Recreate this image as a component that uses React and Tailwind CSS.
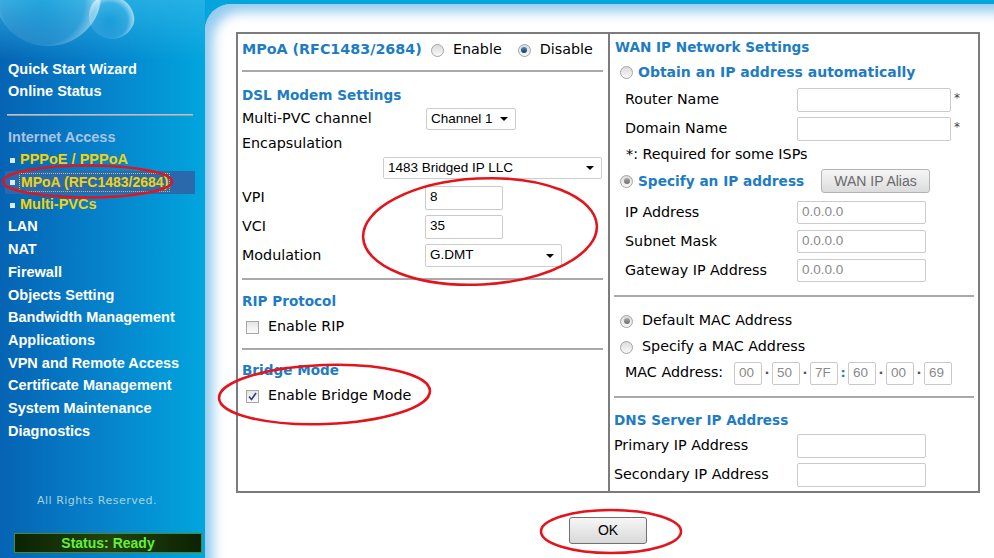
import React from 'react';

const sideFont = "font-['Liberation_Sans',Arial,sans-serif]";
const formFont = "font-['DejaVu_Sans',Verdana,sans-serif]";
const ctrlFont = "font-['Liberation_Sans',Arial,sans-serif]";

const navItems = [
  'LAN',
  'NAT',
  'Firewall',
  'Objects Setting',
  'Bandwidth Management',
  'Applications',
  'VPN and Remote Access',
  'Certificate Management',
  'System Maintenance',
  'Diagnostics',
];

const Radio = ({ checked, tone = 'blue' }) => (
  <span className="flex h-[13px] w-[13px] shrink-0 items-center justify-center rounded-full border border-[#a4a4a4] bg-gradient-to-b from-[#dcdcdc] to-[#f8f8f8]">
    {checked && (
      <span
        className={
          tone === 'blue'
            ? 'h-[6px] w-[6px] rounded-full bg-gradient-to-b from-[#4b8fc4] to-[#0f3c66]'
            : 'h-[6px] w-[6px] rounded-full bg-gradient-to-b from-[#a8a8a8] to-[#6e6e6e]'
        }
      />
    )}
  </span>
);

const Checkbox = ({ checked }) => (
  <span className="flex h-[13px] w-[13px] shrink-0 items-center justify-center border border-[#a6a6a6] bg-gradient-to-b from-[#e6e6e6] to-[#fbfbfb]">
    {checked && (
      <svg width="9" height="9" viewBox="0 0 9 9">
        <path d="M1 4.5 L3.5 7.5 L8 1" fill="none" stroke="#2c3d85" strokeWidth="1.6" />
      </svg>
    )}
  </span>
);

const Select = ({ value, className }) => (
  <div
    className={`flex items-center justify-between rounded-[2px] border border-[#cdcdcd] bg-white pl-[4px] pr-[7px] text-[13.5px] text-black ${ctrlFont} ${className}`}
  >
    <span>{value}</span>
    <span className="h-0 w-0 border-x-[4px] border-t-[4px] border-x-transparent border-t-black" />
  </div>
);

const Field = ({ value = '', className, gray }) => (
  <div
    className={`flex items-center rounded-[2px] border border-[#cbcbcb] bg-white pl-[4px] text-[13.5px] ${ctrlFont} ${
      gray ? 'text-[#8a8a8a]' : 'text-black'
    } ${className}`}
  >
    {value}
  </div>
);

const Heading = ({ children, className = '' }) => (
  <div className={`flex items-center text-[13.6px] font-bold text-[#1e7cc3] ${formFont} ${className}`}>{children}</div>
);

const Rule = ({ className = '' }) => <div className={`h-[2px] bg-[#a9a9a9] ${className}`} />;

const Sidebar = () => (
  <aside className={`relative flex h-[558px] w-[205px] shrink-0 flex-col bg-gradient-to-r from-[#0663b3] via-[#0682cb] to-[#02a6de] ${sideFont}`}>
    <svg className="absolute left-0 top-0" width="205" height="60" viewBox="0 0 205 60">
      <defs>
        <linearGradient id="topfade" x1="0" y1="0" x2="0" y2="1">
          <stop offset="0" stopColor="#2cb4e6" stopOpacity="0.8" />
          <stop offset="1" stopColor="#2cb4e6" stopOpacity="0" />
        </linearGradient>
        <radialGradient id="bub" cx="0.45" cy="0.6" r="0.55">
          <stop offset="0" stopColor="#ffffff" stopOpacity="0" />
          <stop offset="0.7" stopColor="#ffffff" stopOpacity="0.1" />
          <stop offset="0.95" stopColor="#ffffff" stopOpacity="0.55" />
          <stop offset="1" stopColor="#ffffff" stopOpacity="0" />
        </radialGradient>
      </defs>
      <rect x="0" y="0" width="205" height="60" fill="url(#topfade)" />
      <circle cx="48" cy="-8" r="54" fill="url(#bub)" />
      <circle cx="112" cy="16" r="23" fill="url(#bub)" />
    </svg>

    <div className="relative flex flex-col whitespace-nowrap pt-[59px] text-[14.5px] font-bold">
      <div className="flex h-[22px] items-center pl-[8px] text-white">Quick Start Wizard</div>
      <div className="flex h-[22px] items-center pl-[8px] text-white">Online Status</div>
      <div className="ml-[7px] mt-[11px] h-[2px] w-[186px] bg-gradient-to-b from-[#c8d2dc] to-[#7f8fa2]" />
      <div className="mt-[11px] flex h-[22px] items-center pl-[8px] text-[#a9c4e2]">Internet Access</div>
      <div className="flex h-[22px] items-center pl-[10px] text-[#f2d20c]">
        <span className="mr-[5px] h-[5px] w-[5px] bg-[#d7ecf6]" />
        PPPoE / PPPoA
      </div>
      <div className="ml-[5px] flex h-[23px] w-[190px] items-center bg-[#2a6aac] pl-[5px] text-[14px] text-[#f2d20c]">
        <span className="mr-[4px] h-[5px] w-[5px] shrink-0 bg-[#d7ecf6]" />
        <span className="border border-dotted border-[#c9c06a] px-[1px] leading-[17px]">MPoA (RFC1483/2684)</span>
      </div>
      <div className="flex h-[22px] items-center pl-[10px] text-[#f2d20c]">
        <span className="mr-[5px] h-[5px] w-[5px] bg-[#d7ecf6]" />
        Multi-PVCs
      </div>
      {navItems.map((item) => (
        <div key={item} className="flex h-[22.7px] items-center pl-[8px] text-white">
          {item}
        </div>
      ))}
    </div>

    <div className="flex-1" />
    <div className="flex h-[14px] items-center pl-[37px] font-['DejaVu_Sans',Verdana,sans-serif] text-[11px] tracking-[0.5px] text-[#a6d3dd]">
      All Rights Reserved.
    </div>
    <div className="mb-[5px] ml-[14px] mt-[25px] flex h-[20px] w-[188px] items-center justify-center border border-[#4f8a22] bg-gradient-to-r from-[#0c2204] via-[#23430c] to-[#0c2204] text-[14px] font-bold text-[#62f03a]">
      Status: Ready
    </div>
  </aside>
);

const LeftColumn = () => (
  <div className={`flex flex-col border-r-2 border-[#7c7c7c] px-[4px] text-[14.3px] text-black ${formFont}`}>
    <div className="flex h-[32px] items-center">
      <span className="w-[189px] text-[14.3px] font-bold text-[#1e7cc3]">MPoA (RFC1483/2684)</span>
      <span className="flex items-center gap-[9px]">
        <Radio />
        Enable
      </span>
      <span className="ml-[16px] flex items-center gap-[9px]">
        <Radio checked />
        Disable
      </span>
    </div>
    <Rule className="mr-[1px] mt-[4px]" />
    <Heading className="mt-[11px] h-[24px]">DSL Modem Settings</Heading>
    <div className="flex h-[24px] items-center">
      <span className="w-[184px]">Multi-PVC channel</span>
      <Select value="Channel 1" className="h-[22px] w-[90px]" />
    </div>
    <div className="flex h-[25px] items-center">Encapsulation</div>
    <div className="flex h-[24px] items-center">
      <Select value="1483 Bridged IP LLC" className="ml-[141px] h-[22px] w-[219px]" />
    </div>
    <div className="mt-[3px] flex h-[29px] items-center">
      <span className="w-[183px]">VPI</span>
      <Field value="8" className="h-[24px] w-[78px]" />
    </div>
    <div className="flex h-[29px] items-center">
      <span className="w-[183px]">VCI</span>
      <Field value="35" className="h-[24px] w-[78px]" />
    </div>
    <div className="flex h-[29px] items-center">
      <span className="w-[183px]">Modulation</span>
      <Select value="G.DMT" className="h-[23px] w-[137px]" />
    </div>
    <Rule className="mr-[1px] mt-[8px]" />
    <Heading className="mt-[9px] h-[24px]">RIP Protocol</Heading>
    <div className="flex h-[28px] items-center gap-[9px] pl-[4px]">
      <Checkbox />
      Enable RIP
    </div>
    <Rule className="mr-[1px] mt-[7px]" />
    <Heading className="mt-[8px] h-[24px]">Bridge Mode</Heading>
    <div className="flex h-[28px] items-center gap-[9px] pl-[4px]">
      <Checkbox checked />
      Enable Bridge Mode
    </div>
  </div>
);

const MacBox = ({ value }) => (
  <div className={`flex h-[23px] w-[28px] items-center rounded-[2px] border border-[#c9c9c9] pl-[4px] text-[13.5px] text-[#8a8a8a] ${ctrlFont}`}>
    {value}
  </div>
);

const Sep = ({ ch = '·', blue }) => (
  <span className={`flex w-[10px] items-center justify-center text-[13px] font-bold ${blue ? 'text-[#1e7cc3]' : 'text-[#555]'}`}>{ch}</span>
);

const RightColumn = () => (
  <div className={`flex flex-col text-[14.3px] text-black ${formFont}`}>
    <Heading className="h-[26px] pl-[5px]">WAN IP Network Settings</Heading>
    <div className="flex h-[24px] items-center gap-[5px] pl-[10px]">
      <Radio />
      <span className="text-[14px] font-bold text-[#1e7cc3]">Obtain an IP address automatically</span>
    </div>
    <div className="mt-[1px] flex h-[29px] items-center pl-[15px]">
      <span className="w-[172px]">Router Name</span>
      <Field className="h-[24px] w-[154px]" />
      <span className="ml-[3px] self-start pt-[4px] text-[12px] text-[#444]">*</span>
    </div>
    <div className="flex h-[29px] items-center pl-[15px]">
      <span className="w-[172px]">Domain Name</span>
      <Field className="h-[24px] w-[154px]" />
      <span className="ml-[3px] self-start pt-[4px] text-[12px] text-[#444]">*</span>
    </div>
    <div className="flex h-[24px] items-center pl-[16px]">*: Required for some ISPs</div>
    <div className="flex h-[28px] items-center pl-[10px]">
      <Radio checked tone="gray" />
      <span className="ml-[5px] w-[183px] text-[13.7px] font-bold text-[#1e7cc3]">Specify an IP address</span>
      <button className={`flex h-[24px] w-[109px] items-center justify-center rounded-[3px] border border-[#b4b4b4] bg-gradient-to-b from-[#f6f6f6] to-[#dcdcdc] text-[14px] text-[#6a6a6a] ${ctrlFont}`}>
        WAN IP Alias
      </button>
    </div>
    <div className="mt-[3px] flex h-[29px] items-center pl-[15px]">
      <span className="w-[172px]">IP Address</span>
      <Field value="0.0.0.0" gray className="h-[23px] w-[129px]" />
    </div>
    <div className="flex h-[29px] items-center pl-[15px]">
      <span className="w-[172px]">Subnet Mask</span>
      <Field value="0.0.0.0" gray className="h-[23px] w-[129px]" />
    </div>
    <div className="flex h-[29px] items-center pl-[15px]">
      <span className="w-[172px]">Gateway IP Address</span>
      <Field value="0.0.0.0" gray className="h-[23px] w-[129px]" />
    </div>
    <Rule className="mx-[4px] mt-[10px]" />
    <div className="mt-[11px] flex h-[26px] items-center gap-[9px] pl-[10px]">
      <Radio checked tone="gray" />
      Default MAC Address
    </div>
    <div className="flex h-[26px] items-center gap-[9px] pl-[10px]">
      <Radio />
      Specify a MAC Address
    </div>
    <div className="flex h-[26px] items-center pl-[15px]">
      <span className="w-[109px]">MAC Address:</span>
      <MacBox value="00" />
      <Sep />
      <MacBox value="50" />
      <Sep />
      <MacBox value="7F" />
      <Sep ch=":" blue />
      <MacBox value="60" />
      <Sep />
      <MacBox value="00" />
      <Sep />
      <MacBox value="69" />
    </div>
    <Rule className="mx-[4px] mt-[10px]" />
    <Heading className="mt-[10px] h-[24px] pl-[4px]">DNS Server IP Address</Heading>
    <div className="flex h-[28px] items-center pl-[4px]">
      <span className="w-[183px]">Primary IP Address</span>
      <Field className="h-[24px] w-[129px]" />
    </div>
    <div className="flex h-[29px] items-center pl-[4px]">
      <span className="w-[183px]">Secondary IP Address</span>
      <Field className="h-[24px] w-[129px]" />
    </div>
  </div>
);

const Annotations = () => (
  <svg className="pointer-events-none absolute left-0 top-0" width="994" height="558" viewBox="0 0 994 558">
    <g fill="none" stroke="#e3141c" strokeWidth="2.6">
      <ellipse cx="87.5" cy="181.5" rx="84.5" ry="16" />
      <ellipse cx="480" cy="231.5" rx="117" ry="53" transform="rotate(-3 480 231.5)" />
      <ellipse cx="324.5" cy="394.5" rx="105.5" ry="29.5" transform="rotate(-2 324.5 394.5)" />
      <ellipse cx="611" cy="531.5" rx="70" ry="21.5" />
    </g>
  </svg>
);

export default function App() {
  return (
    <div className="relative flex h-[558px] w-[994px] overflow-hidden bg-[#04a4dd]">
      <Sidebar />
      <main className="flex-1 pt-[4px]">
        <div className="h-full rounded-tl-[26px] bg-white pl-[31px] pt-[28px] shadow-[inset_10px_10px_12px_-2px_rgba(60,160,225,0.55)]">
          <div className="grid h-[461px] w-[744px] grid-cols-[372px_1fr] border-2 border-[#7c7c7c]">
            <LeftColumn />
            <RightColumn />
          </div>
          <div className="flex w-[744px] justify-center pt-[24px]">
            <button className={`h-[27px] w-[78px] rounded-[3px] border border-[#707070] bg-gradient-to-b from-[#f6f6f6] to-[#d9d9d9] text-[14px] text-black ${ctrlFont}`}>
              OK
            </button>
          </div>
        </div>
      </main>
      <Annotations />
    </div>
  );
}
